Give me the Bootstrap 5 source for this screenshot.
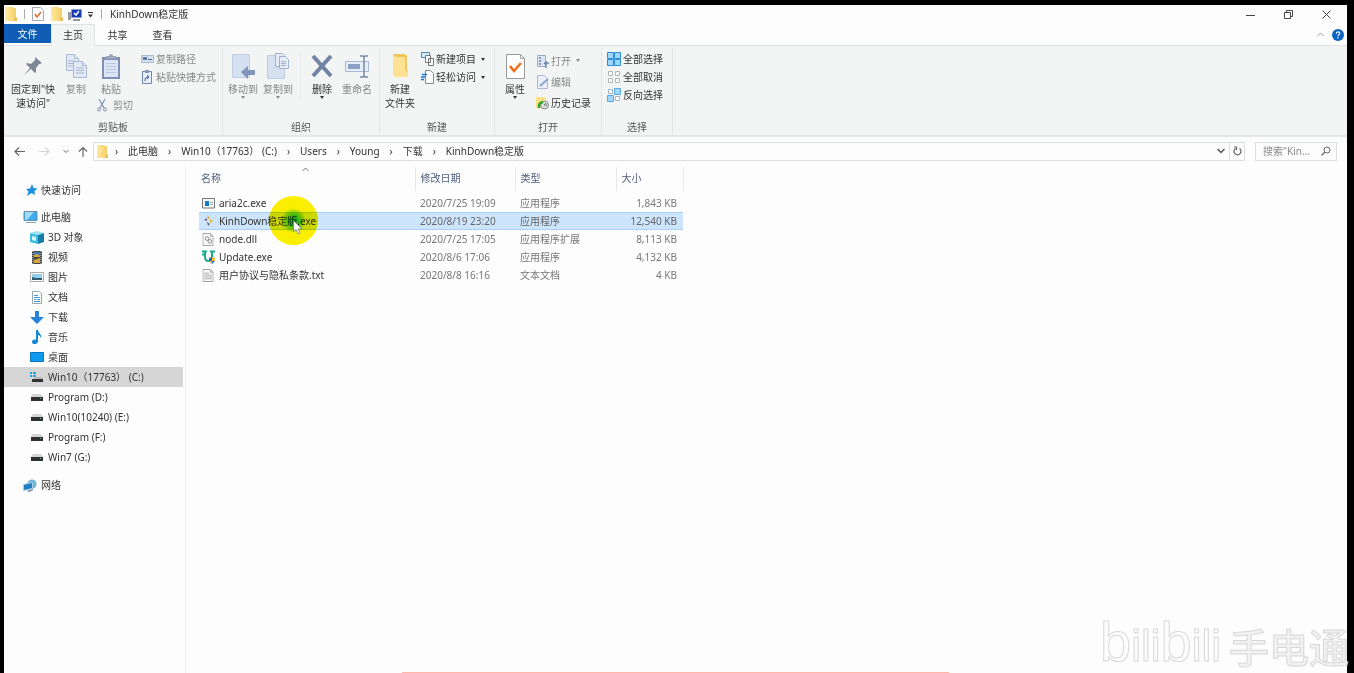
<!DOCTYPE html>
<html lang="zh-CN">
<head>
<meta charset="utf-8">
<meta name="viewport" content="width=device-width, initial-scale=1">
<title>KinhDown稳定版</title>
<link rel="stylesheet" href="https://cdn.jsdelivr.net/npm/bootstrap@5.3.0/dist/css/bootstrap.min.css">
<style>
body{background:#000;font-family:"Noto Sans","Noto Sans CJK SC",sans-serif;font-size:10px;line-height:14px;color:#333}
button,input,a{font:inherit;color:inherit}
button{border:0;background:transparent;padding:0;white-space:nowrap}
a{text-decoration:none}
svg{display:block;flex:none}
.shell{padding:5px 7px 0 4px}
.win{background:#fdfdfd;overflow:hidden}
.titlebar{height:19px;padding:0 2px 1px 1px}
.quick{gap:7px}
.titlebar .sep{width:1px;height:10px;background:#aaa}
.quick .tight{margin:0 -2px}
.winbtns button{width:38px;height:18px}
.tabs{height:22px;border-bottom:1px solid #dfe3e3}
.tabs button{height:21px;width:45px}
.tabs .file{width:47px;height:19px;background:#0f5db5;color:#fff}
.tabs .active{width:44px;height:22px;padding-bottom:2px;background:#f3f5f5;border:1px solid #dfe3e3;border-bottom:0}
.tab-end{padding-right:3px}
.ribbon{background:#f3f5f5;border-bottom:2px solid #e3e6e6;height:91px;padding-top:2px}
.grp{border-right:1px solid #e2e5e5;height:86px;padding:2px 3px 0}
.grp-name{color:#555;text-align:center}
.big{display:flex;flex-direction:column;align-items:center}
.big .pic{height:32px;display:flex;align-items:center}
.w34{width:34px}.w36{width:36px}.w52{width:52px}
.g1{width:219px}.g2{width:157px}.g3{width:115px}.g4{width:107px}.g5{width:71px}
.g5 .flex-grow-1{padding-left:2px}
.line{display:flex;align-items:center;gap:2px;height:18px}
.tall .line{height:21px}
.dim{color:#888}
.caret{width:0;height:0;border:2px solid transparent;border-top:3px solid currentColor;border-bottom:0}
.line .caret{margin-left:3px}
.split{background:#ccd0d4;height:48px}
.addr{height:28px;padding:0 10px 0 9px}
.steps{gap:12px;width:80px}
.addr-box{height:19px;border:1px solid #dcdfdf;padding-left:3px}
.crumbs{padding-left:7px}
.crumbs a{margin:0 10px}
.refresh{border-left:1px solid #dcdfdf;width:15px;height:17px}
.search{width:82px;height:19px;border:1px solid #dcdfdf;padding:0 6px 0 7px;margin-left:10px}
.search input{width:58px;border:0;outline:0;background:transparent;padding:0}
.search input::placeholder{color:#888;opacity:1}
.side{width:182px;border-right:1px solid #f0f0f0;padding:15px 2px 0 0}
.side a{display:flex;align-items:center;height:20px;gap:3px;padding-left:19px}
.side .sub{padding-left:26px;gap:4px}
.side .on{background:#d6d6d6}
.side .first{margin-bottom:7px}.side .last{margin-top:8px}
.files{width:484px;margin:2px 0 0 13px;table-layout:fixed}
.files th{height:24px;font-weight:400;color:#4e5f7d;padding:0 5px 2px;border-right:1px solid #e8e8e8;position:relative}
.files th:first-child{padding-left:2px}
.files td{height:18px;padding:0 5px;color:#777;white-space:nowrap}
.files td:first-child{color:#333;padding-left:3px}
.files td:last-child{text-align:right;padding-right:6px}
.files .gapline td{height:3px}
.files .picked td{background:#cce5fc;box-shadow:inset 0 1px #a9d1f5,inset 0 -1px #a9d1f5;color:#666}
.files .picked td:first-child{color:#333}
.sorted{position:absolute;left:103px;top:0}
.halo{position:absolute;left:50px;top:-18px;width:49px;height:49px;border-radius:50%;mix-blend-mode:multiply;background:radial-gradient(circle,#1fc01f 0,#2cc81c 12%,#a0dc00 26%,#fcf000 36%,#fff000 100%)}
.pointer{position:absolute;left:74px;top:6px}
.mark-wrap{position:absolute;right:5px;bottom:0;color:#f1f1f1;-webkit-text-stroke:1px #d8d8d8;white-space:nowrap;height:54px;pointer-events:none}
.logo-word{font:44px/46px "Liberation Sans",sans-serif;color:#fdfdfd}
.logo-word b{font-size:56px;font-weight:400}
.owner{font:500 40px/54px "Noto Sans CJK SC",sans-serif}
.progress-line{position:absolute;left:402px;bottom:0;width:40.4%;height:1px;background:#ffb8a8}
</style>
</head>
<body>
<svg width="0" height="0" class="position-absolute">
<defs>
<linearGradient id="gold" x2="1"><stop stop-color="#ffe9a0"/><stop offset="1" stop-color="#f5cd62"/></linearGradient>
<symbol id="folder" viewBox="0 0 12 14"><path fill="url(#gold)" d="M0 0h8v1h3v9l1 1v3H0z"/><path fill="#e9bd55" d="M10 10l2 1v3h-3z"/></symbol>
<symbol id="disk" viewBox="0 0 12 8"><path fill="#d5d5d5" d="M2 0h8l2 3H0z"/><path fill="#303030" d="M0 3h12v4H0z"/><path fill="#70c070" d="M9 4h1v1H9z"/></symbol>
<symbol id="page" viewBox="0 0 12 14"><path fill="#f8f8f8" stroke="#9a9a9a" d="M.5.5h8l3 3v10H.5z"/><path fill="none" stroke="#aaa" d="M8.500 .5v3h3"/></symbol>
</defs>
</svg>
<div class="shell d-flex flex-column min-vh-100 position-relative">
<div class="win flex-grow-1 d-flex flex-column">

<header class="titlebar d-flex align-items-center">
 <div class="quick d-flex align-items-center">
 <svg width="12" height="14"><use href="#folder"/></svg>
 <span class="sep"></span>
 <button aria-label="属性"><svg width="12" height="14" viewBox="0 0 12 14"><path fill="#fff" stroke="#aaa" d="M.5.5h8l3 3v10H.5z"/><path d="M3 7l2 3 4-5" fill="none" stroke="#e06a35" stroke-width="1.500"/></svg></button>
 <button aria-label="新建文件夹"><svg width="12" height="14"><use href="#folder"/></svg></button>
 <button class="tight" aria-label="网络"><svg width="14" height="13" viewBox="0 0 14 13"><path fill="#999" d="M0 4h3v8H0zM5 11h7v2H5z"/><path fill="#1438b8" stroke="#8a9cc8" d="M3.500 1.500h10v8h-10z"/><path d="M6 5l2 2 3-4" fill="none" stroke="#fff" stroke-width="1.500"/></svg></button>
 <button aria-label="自定义"><svg width="7" height="7" viewBox="0 0 7 7"><path fill="#333" d="M1 1h5v1H1zM1 3.500h5L3.500 6.500z"/></svg></button>
 <span class="sep"></span>
 </div>
 <span class="ms-1 ps-1">KinhDown稳定版</span>
 <div class="winbtns d-flex ms-auto">
  <button class="d-flex align-items-center justify-content-center" aria-label="最小化"><svg width="9" height="9" viewBox="0 0 9 9"><path stroke="#444" d="M0 5.500h9"/></svg></button>
  <button class="d-flex align-items-center justify-content-center" aria-label="还原"><svg width="9" height="9" viewBox="0 0 9 9"><path fill="none" stroke="#444" d="M.5 2.500h6v6h-6zM2.500 2V.5h6v6H7"/></svg></button>
  <button class="d-flex align-items-center justify-content-center" aria-label="关闭"><svg width="9" height="9" viewBox="0 0 9 9"><path stroke="#444" d="M.5.5l8 8M8.500.5l-8 8"/></svg></button>
 </div>
</header>

<nav class="tabs d-flex">
 <button class="file">文件</button><button class="active">主页</button><button>共享</button><button>查看</button>
 <div class="tab-end d-flex align-items-center ms-auto gap-2">
  <svg width="7" height="5" viewBox="0 0 7 5"><path d="M.5 4l3-3 3 3" fill="none" stroke="#999"/></svg>
  <svg width="12" height="12" viewBox="0 0 12 12"><circle cx="6" cy="6" r="6" fill="#0b63c4"/><path d="M4.300 4.700C4.300 2.200 7.800 2.300 7.700 4.400 7.600 5.700 6 5.700 6 7.300M6 8.200v1.400" stroke="#fff" stroke-width="1.200" fill="none"/></svg>
 </div>
</nav>

<section class="ribbon d-flex">
 <div class="grp g1 d-flex flex-column">
  <div class="d-flex flex-grow-1">
   <button class="big w52"><span class="pic"><svg width="18" height="18" viewBox="0 0 18 18"><path fill="#7d8796" d="M11 0l7 6-2 1-1 0-3 4 0 4-1 1-4-4-7 6 6-7-4-4 1-1 4 1 4-4z"/></svg></span>固定到"快<br>速访问"</button>
   <button class="big w34 dim"><span class="pic"><svg width="21" height="24" viewBox="0 0 21 24"><g fill="#e2e9f4" stroke="#a9b9d3"><path d="M.5.500h8l4 4v12H.5z"/><path d="M8.500.5v4h4M2 7h7M2 9.500h7M2 12h7"/><path d="M7.500 7.500h9l4 4v12h-13z"/><path d="M16.500 7.500v4h4M10 14h8M10 16.500h8M10 19h8"/></g></svg></span>复制</button>
   <div><button class="big w36 dim"><span class="pic"><svg width="18" height="25" viewBox="0 0 18 25"><path fill="#7e91b5" d="M0 3h18v22H0z"/><path fill="#dbe5f5" d="M2 6h14v17H2z"/><path fill="#9aa7bd" d="M4 5V2h3a2 2 0 0 1 4 0h3v3z"/><path stroke="#b9c6dc" d="M4 9.500h10M4 12.500h10M4 15.500h10M4 18.500h10"/></svg></span>粘贴</button>
    <button class="line dim ms-1"><svg width="10" height="13" viewBox="0 0 10 13"><path d="M2 0l5 9M8 0L3 9" stroke="#7c93b8" stroke-width="1.200"/><circle cx="2" cy="10.500" r="1.500" fill="none" stroke="#7c93b8"/><circle cx="8" cy="10.500" r="1.500" fill="none" stroke="#7c93b8"/></svg><span class="ps-1">剪切</span></button></div>
   <div class="ms-1 ps-1"><button class="line dim"><svg width="13" height="8" viewBox="0 0 13 8"><path fill="#d5e0f0" stroke="#a9bbd6" d="M.5.5h12v7H.5z"/><path fill="none" stroke="#4b6a9b" d="M2 2l1 3 1-3 1 3 1-3M7 4.500h4"/></svg>复制路径</button>
   <button class="line dim"><svg width="13" height="14" viewBox="0 0 13 14"><path fill="#e8effa" stroke="#7189b0" d="M1.500 1.500h9v12h-9z"/><path fill="#8496b5" d="M4 0h4v3H4z"/><path d="M4 11c0-3 1-4 4-4M6 5l2 2-2 2" fill="none" stroke="#345b95"/></svg>粘贴快捷方式</button></div>
  </div><div class="grp-name">剪贴板</div>
 </div>
 <div class="grp g2 d-flex flex-column">
  <div class="d-flex flex-grow-1">
   <button class="big w34 dim"><span class="pic"><svg width="23" height="26" viewBox="0 0 23 26"><path fill="#d5e0f0" stroke="#c1cfe4" d="M.5 1.500h17v23H.5z"/><path fill="#7f94b8" d="M9 19l7-6v4h7v5h-7v4z"/></svg></span>移动到<span class="caret"></span></button>
   <button class="big w36 dim"><span class="pic"><svg width="22" height="27" viewBox="0 0 22 27"><path fill="#d5e0f0" stroke="#c1cfe4" d="M.5 2.500h17v23H.5z"/><g fill="#e5ecf7" stroke="#9fb1cf"><path d="M8.500.5h7l2 2v11h-9z"/><path d="M12.500 3.500h6l3 3v9h-9zM14 8.500h5M14 10.500h5M14 12.500h5"/></g></svg></span>复制到<span class="caret"></span></button>
   <div class="vr split mx-1"></div>
   <button class="big w34"><span class="pic"><svg width="22" height="22" viewBox="0 0 22 22"><path d="M2 1l18 20M20 1L2 21" stroke="#7383a5" stroke-width="4"/></svg></span>删除<span class="caret"></span></button>
   <button class="big w36 dim"><span class="pic"><svg width="24" height="23" viewBox="0 0 24 23"><path fill="#e8eef8" stroke="#a9b9d3" d="M.5 6.500h23v10H.5z"/><path fill="#8ba0c5" d="M3 9h12v5H3z"/><path d="M15 1h3l1 1 1-1h3M19 2v19M15 22h3l1-1 1 1h3" fill="none" stroke="#7888a5" stroke-width="1.500"/></svg></span>重命名</button>
  </div><div class="grp-name">组织</div>
 </div>
 <div class="grp g3 d-flex flex-column">
  <div class="d-flex flex-grow-1">
   <button class="big w34"><span class="pic"><svg width="15" height="24" viewBox="0 0 15 24"><path fill="#f3c65a" d="M0 0h12v1h2v15l1 1v6H4z"/><path fill="#ffe193" d="M0 1l4 2v21l-4-3zM4 3h8v13l3 2v5H4z"/></svg></span>新建<br>文件夹</button>
   <div class="ms-1"><button class="line"><svg width="13" height="14" viewBox="0 0 13 14"><path fill="#d6ecfa" stroke="#4b89b5" d="M.5.5h8v5h-8z"/><path fill="#fff" stroke="#777" d="M4.500 3.500h5v7h-5zM7.500 6.500h5v7h-5z"/></svg>新建项目<span class="caret"></span></button>
   <button class="line"><svg width="13" height="14" viewBox="0 0 13 14"><path fill="#fff" stroke="#888" d="M4.500.5h5l3 3v10h-8z"/><path d="M0 7h4M1 4.500h5M0 9.500h3" stroke="#1976d2" stroke-width="1.500"/></svg>轻松访问<span class="caret"></span></button></div>
  </div><div class="grp-name">新建</div>
 </div>
 <div class="grp g4 d-flex flex-column">
  <div class="d-flex flex-grow-1">
   <button class="big w34"><span class="pic"><svg width="19" height="25" viewBox="0 0 19 25"><path fill="#fff" stroke="#999" d="M.5.5h14l4 4v20H.5z"/><path fill="none" stroke="#aaa" d="M14.500.5v4h4"/><path d="M4 12l4 5 7-8" fill="none" stroke="#ec7016" stroke-width="2.500"/></svg></span>属性<span class="caret"></span></button>
   <div class="ms-1 tall"><button class="line dim"><svg width="13" height="14" viewBox="0 0 13 14"><path fill="#dce5f4" stroke="#9aaccc" d="M1.500 1.500h8v11h-8z"/><path d="M3 4h2M3 7h2M3 10h2" stroke="#6680ae" stroke-width="1.500"/><path d="M10 14V8M8 10l2-2 3 2" fill="none" stroke="#7087b0" stroke-width="1.500"/></svg>打开<span class="caret"></span></button>
   <button class="line dim"><svg width="13" height="14" viewBox="0 0 13 14"><path fill="#eaf0fa" stroke="#a9b9d3" d="M1.500.500h7l3 3v10h-10z"/><path d="M4 11L12 4" stroke="#8da4cb" stroke-width="2"/></svg>编辑</button>
   <button class="line"><svg width="13" height="14" viewBox="0 0 13 14"><path fill="#ffe08a" d="M0 1h9v11H0z"/><circle cx="8.500" cy="9" r="4" fill="#ddd" stroke="#888"/><path d="M8 9l2-2M8 9h3" fill="none" stroke="#777"/><path d="M3 12q-1-5 4-6" fill="none" stroke="#2ba52b" stroke-width="2.500"/></svg>历史记录</button></div>
  </div><div class="grp-name">打开</div>
 </div>
 <div class="grp g5 d-flex flex-column">
  <div class="flex-grow-1">
   <button class="line"><svg width="14" height="14" viewBox="0 0 14 14"><path fill="#9fd6fb" stroke="#2a8fd8" d="M.5.5h6v6h-6zM7.500.5h6v6h-6zM.5 7.500h6v6h-6zM7.500 7.500h6v6h-6z"/></svg>全部选择</button>
   <button class="line"><svg width="14" height="14" viewBox="0 0 14 14"><path fill="#fff" stroke="#b5b5b5" d="M1.500 1.500h4v4h-4zM8.500 1.500h4v4h-4zM1.500 8.500h4v4h-4zM8.500 8.500h4v4h-4z"/></svg>全部取消</button>
   <button class="line"><svg width="14" height="14" viewBox="0 0 14 14"><path fill="#fff" stroke="#a5b5c5" d="M1.500 1.500h4v4h-4zM8.500 8.500h4v4h-4z"/><path fill="#9fd6fb" stroke="#5aa9e0" d="M7.500.5h6v6h-6zM.5 7.500h6v6h-6z"/></svg>反向选择</button>
  </div><div class="grp-name">选择</div>
 </div>
</section>

<div class="addr d-flex align-items-center">
 <div class="steps d-flex align-items-center">
 <button aria-label="后退"><svg width="13" height="11" viewBox="0 0 13 11"><path d="M12 5.500H2M6 1.500L2 5.500l4 4" fill="none" stroke="#666" stroke-width="1.200"/></svg></button>
 <button aria-label="前进"><svg width="13" height="11" viewBox="0 0 13 11"><path d="M1 5.500h10M7 1.500l4 4-4 4" fill="none" stroke="#d5d5d5" stroke-width="1.200"/></svg></button>
 <div class="d-flex align-items-center gap-2">
 <button aria-label="最近"><svg width="6" height="5" viewBox="0 0 6 5"><path d="M.5 1L3 3.500 5.500 1" fill="none" stroke="#666"/></svg></button>
 <button aria-label="上移"><svg width="12" height="11" viewBox="0 0 12 11"><path d="M6 11V1.500M2 5.500l4-4 4 4" fill="none" stroke="#666" stroke-width="1.200"/></svg></button>
 </div>
 </div>
 <div class="addr-box flex-grow-1 d-flex align-items-center">
  <svg width="11" height="13"><use href="#folder"/></svg>
  <nav class="crumbs d-flex align-items-center flex-grow-1">›<a href="#">此电脑</a>›<a href="#">Win10（17763） (C:)</a>›<a href="#">Users</a>›<a href="#">Young</a>›<a href="#">下载</a>›<a href="#">KinhDown稳定版</a></nav>
  <button class="me-1" aria-label="历史"><svg width="8" height="6" viewBox="0 0 8 6"><path d="M.5 1L4 4.500 7.500 1" fill="none" stroke="#555" stroke-width="1.500"/></svg></button>
  <button class="refresh d-flex align-items-center justify-content-center" aria-label="刷新"><svg width="9" height="10" viewBox="0 0 9 10"><path d="M2.500 2.500A3.500 3.500 0 1 0 6.500 2.500M1 1h2.500v3" fill="none" stroke="#666" stroke-width="1.200"/></svg></button>
 </div>
 <div class="search d-flex align-items-center"><input type="text" placeholder="搜索&quot;Kin..." aria-label="搜索"><svg width="10" height="10" viewBox="0 0 10 10"><circle cx="6" cy="4" r="3" fill="none" stroke="#666"/><path d="M4 6L.5 9.500" stroke="#666" stroke-width="1.300"/></svg></div>
</div>

<main class="d-flex flex-grow-1">
 <nav class="side flex-shrink-0">
  <a href="#" class="first"><svg width="15" height="12" viewBox="0 0 15 12"><path fill="#1e90e0" d="M9 0l1.500 4 4 .5-3 2.500.5 4-3.500-2L4 12l1.500-4.500L3 5l4-.5z"/></svg>快速访问</a>
  <a href="#"><svg width="15" height="13" viewBox="0 0 15 13"><path fill="#38aef0" stroke="#668fa8" d="M1 .500h13v9H1z"/><path fill="#a0d9f8" d="M2 1l9 0-7 8H2z"/><path fill="#8fa0aa" d="M3 11h10v1H3z"/></svg>此电脑</a>
  <a href="#" class="sub"><svg width="14" height="13" viewBox="0 0 14 13"><path fill="#9be3f7" d="M0 2l7-2 7 2-6 2z"/><path fill="#3bbbe0" d="M0 2l8 2v9l-8-2z"/><path fill="#167ca8" d="M8 4l6-2v9l-6 2z"/><path fill="#d4f5fc" d="M2 5l4 1v4l-4-1z"/></svg>3D 对象</a>
  <a href="#" class="sub"><svg width="14" height="13" viewBox="0 0 14 13"><path fill="#444" d="M2 0h10v13H2z"/><path fill="#4b79b8" d="M4 1h6v5H4z"/><path fill="#d4a440" d="M4 4l3-1 3 2v1H4zM4 9l6-2v5H4z"/><path stroke="#ddd" stroke-dasharray="1 1" d="M3 0v13M11 0v13"/></svg>视频</a>
  <a href="#" class="sub"><svg width="14" height="11" viewBox="0 0 14 11"><path fill="#fff" stroke="#aaa" d="M.5.500h13v9H.5z"/><path fill="#92cdf0" d="M2 2h10v6H2z"/><path fill="#315d70" d="M2 5l4 1 6 0v2H2z"/></svg>图片</a>
  <a href="#" class="sub"><svg width="14" height="13" viewBox="0 0 14 13"><path fill="#fff" stroke="#9aa5ad" d="M2.500.5h7l2 2v10h-9z"/><path stroke="#3b9cd8" d="M4 4.500h4M4 6.500h6M4 8.500h2M7 8.500h3M4 10.500h6"/></svg>文档</a>
  <a href="#" class="sub"><svg width="14" height="13" viewBox="0 0 14 13"><path fill="#2583da" d="M5 0h4v6h5l-7 7-7-7h5z"/></svg>下载</a>
  <a href="#" class="sub"><svg width="14" height="14" viewBox="0 0 14 14"><path fill="#1288dd" d="M6 0h2c0 3 4 4 3 8-1-2-2-3-3-3v6c0 4-6 4-6 1 0-2 2-3 4-2z"/></svg>音乐</a>
  <a href="#" class="sub"><svg width="14" height="11" viewBox="0 0 14 11"><path fill="#109af0" stroke="#0c73bd" d="M.5.5h13v9H.5z"/></svg>桌面</a>
  <a href="#" class="sub on"><svg width="14" height="12" viewBox="0 0 14 12"><path fill="#18a5ec" d="M0 1h2v2H0zM3 1h3v2H3zM0 4h2v2H0zM3 4h3v2H3z"/><path fill="#333" d="M2 8h11v3H2z"/><path fill="#bbb" d="M6 6h6l1 2H3z"/></svg>Win10（17763） (C:)</a>
  <a href="#" class="sub"><svg width="14" height="10"><use href="#disk" x="1" y="2" width="12" height="8"/></svg>Program (D:)</a>
  <a href="#" class="sub"><svg width="14" height="10"><use href="#disk" x="1" y="2" width="12" height="8"/></svg>Win10(10240) (E:)</a>
  <a href="#" class="sub"><svg width="14" height="10"><use href="#disk" x="1" y="2" width="12" height="8"/></svg>Program (F:)</a>
  <a href="#" class="sub"><svg width="14" height="10"><use href="#disk" x="1" y="2" width="12" height="8"/></svg>Win7 (G:)</a>
  <a href="#" class="last"><svg width="15" height="13" viewBox="0 0 15 13"><circle cx="9" cy="5" r="4.500" fill="#6fb5d9"/><path fill="#1f7fc0" stroke="#a8cfe5" d="M.5 5.500l9-2v6l-9 2z"/><path fill="#667f90" d="M4 12l6-2v1l-4 2z"/></svg>网络</a>
 </nav>

 <div class="flex-grow-1">
 <table class="files">
  <colgroup><col style="width:216px"><col style="width:100px"><col style="width:101px"><col style="width:67px"></colgroup>
  <thead><tr><th>名称<svg class="sorted" width="7" height="5" viewBox="0 0 7 5"><path d="M.5 4l3-3 3 3" fill="none" stroke="#777"/></svg></th><th>修改日期</th><th>类型</th><th>大小</th></tr></thead>
  <tbody>
  <tr class="gapline"><td colspan="4"></td></tr>
  <tr><td><div class="d-flex align-items-center gap-1"><svg width="13" height="11" viewBox="0 0 13 11"><path fill="#f5f8fa" stroke="#777" d="M.5.500h12v9.500H.5z"/><path fill="#1874c4" d="M3 3h4v5H3z"/><path stroke="#9ab" d="M8 4.500h3M8 6.500h3"/></svg>aria2c.exe</div></td><td>2020/7/25 19:09</td><td>应用程序</td><td>1,843 KB</td></tr>
  <tr class="picked"><td><div class="d-flex align-items-center gap-1"><svg width="13" height="12" viewBox="0 0 13 12"><path fill="#e3b52c" d="M5 0l3 3-2 1zM8 4l3 2-3 2z"/><path fill="#667" d="M2 5l3-2v3zM5 7l3 2-2 2z"/></svg><span class="position-relative">KinhDown稳定版.exe<i class="halo"></i><svg class="pointer" width="10" height="15" viewBox="0 0 10 15"><path fill="#fff" stroke="#777" stroke-width=".8" d="M.5.5v11l2.500-2 2 4.500 2-1-2-4h4z"/></svg></span></div></td><td>2020/8/19 23:20</td><td>应用程序</td><td>12,540 KB</td></tr>
  <tr><td><div class="d-flex align-items-center gap-1"><svg width="13" height="13" viewBox="0 0 13 14"><use href="#page" width="12" height="14"/><circle cx="5" cy="6" r="2" fill="none" stroke="#888"/><circle cx="8" cy="9" r="2" fill="none" stroke="#888"/></svg>node.dll</div></td><td>2020/7/25 17:05</td><td>应用程序扩展</td><td>8,113 KB</td></tr>
  <tr><td><div class="d-flex align-items-center gap-1"><svg width="13" height="14" viewBox="0 0 13 14"><path d="M3 1v6q0 4 3.500 4T10 7V1M0 1.500h5M8 1.500h5M0 4.500h3" fill="none" stroke="#20a88b" stroke-width="2"/><path fill="#2568b8" d="M7 8l3-1 3 1v3l-3 3-3-3z"/><path fill="#f2c230" d="M10 7l3 1v3h-3zM7 11h3v3z"/></svg>Update.exe</div></td><td>2020/8/6 17:06</td><td>应用程序</td><td>4,132 KB</td></tr>
  <tr><td><div class="d-flex align-items-center gap-1"><svg width="13" height="13" viewBox="0 0 13 14"><use href="#page" width="12" height="14"/><path stroke="#aaa" d="M2 4.500h5M2 6.500h8M2 8.500h8M2 10.500h8"/></svg>用户协议与隐私条款.txt</div></td><td>2020/8/8 16:16</td><td>文本文档</td><td>4 KB</td></tr>
  </tbody>
 </table>
 </div>
</main>
</div>
<div class="progress-line"></div>
<div class="mark-wrap d-flex"><span class="logo-word me-2"><b>b</b>ili<b>b</b>ili</span><span class="owner">手电通</span></div>
</div>
<script src="https://cdn.jsdelivr.net/npm/bootstrap@5.3.0/dist/js/bootstrap.bundle.min.js"></script>
</body>
</html>
